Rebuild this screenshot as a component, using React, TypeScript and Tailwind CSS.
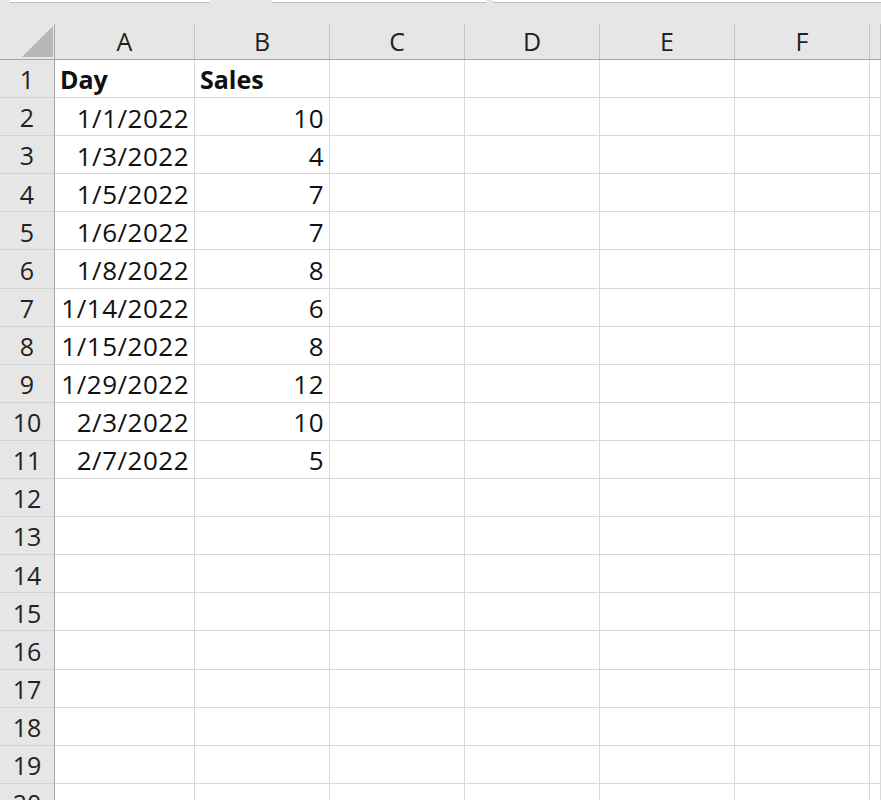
const rows: [string, string][] = [
  ["Day", "Sales"],
  ["1/1/2022", "10"],
  ["1/3/2022", "4"],
  ["1/5/2022", "7"],
  ["1/6/2022", "7"],
  ["1/8/2022", "8"],
  ["1/14/2022", "6"],
  ["1/15/2022", "8"],
  ["1/29/2022", "12"],
  ["2/3/2022", "10"],
  ["2/7/2022", "5"],
];

const letters = ["A", "B", "C", "D", "E", "F", ""];
const widths = [
  "w-[140px]",
  "w-[135px]",
  "w-[135px]",
  "w-[135px]",
  "w-[135px]",
  "w-[135px]",
  "flex-1",
];

const App = () => {
  const rowNums = Array.from({ length: 20 }, (_, i) => i + 1);

  return (
    <div className="w-[881px] h-[800px] overflow-hidden bg-white font-['Open_Sans',sans-serif] text-[#111]">
      {/* bottom edge of name box / formula bar */}
      <div className="flex h-[3px] bg-[#e6e6e6]">
        <div className="ml-[10px] w-[200px] bg-white border-b border-[#bdbdbd]" />
        <div className="ml-[62px] w-[214px] bg-white border-b border-[#bdbdbd]" />
        <div className="ml-[7px] flex-1 bg-white border-b border-[#bdbdbd]" />
      </div>
      <div className="h-[21px] bg-[#e6e6e6]" />

      {/* column headers */}
      <div className="flex h-[36px] bg-[#e6e6e6] border-b border-[#a6a6a6]">
        <div className="w-[55px] shrink-0 border-r border-[#a6a6a6] flex items-end justify-end pr-[1px] pb-[2px]">
          <svg width="31" height="31" viewBox="0 0 31 31">
            <polygon points="0,31 31,0 31,31" fill="#b8b8b8" />
          </svg>
        </div>
        {letters.map((l, i) => (
          <div
            key={i}
            className={`${widths[i]} shrink-0 border-r border-[#c4c4c4] flex items-center justify-center text-[25px] text-[#222]`}
          >
            {l}
          </div>
        ))}
      </div>

      {/* grid body */}
      {rowNums.map((n) => {
        const row = rows[n - 1];
        const isHead = n === 1;
        return (
          <div key={n} className="flex h-[38.1px]">
            <div className="w-[55px] shrink-0 bg-[#e6e6e6] border-r border-b border-r-[#a6a6a6] border-b-[#d2d2d2] flex items-center justify-center pt-[3px] text-[25px] text-[#222]">
              {n}
            </div>
            {widths.map((w, i) => {
              let text = "";
              if (row && i < 2) text = row[i];
              return (
                <div
                  key={i}
                  className={`${w} shrink-0 border-r border-b border-[#d9d9d9] flex items-center pt-[3px] px-[5px] whitespace-nowrap ${
                    isHead
                      ? "justify-start font-bold text-[25px]"
                      : "justify-end text-[26px] tracking-[0.5px]"
                  }`}
                >
                  {text}
                </div>
              );
            })}
          </div>
        );
      })}
    </div>
  );
};

export default App;
